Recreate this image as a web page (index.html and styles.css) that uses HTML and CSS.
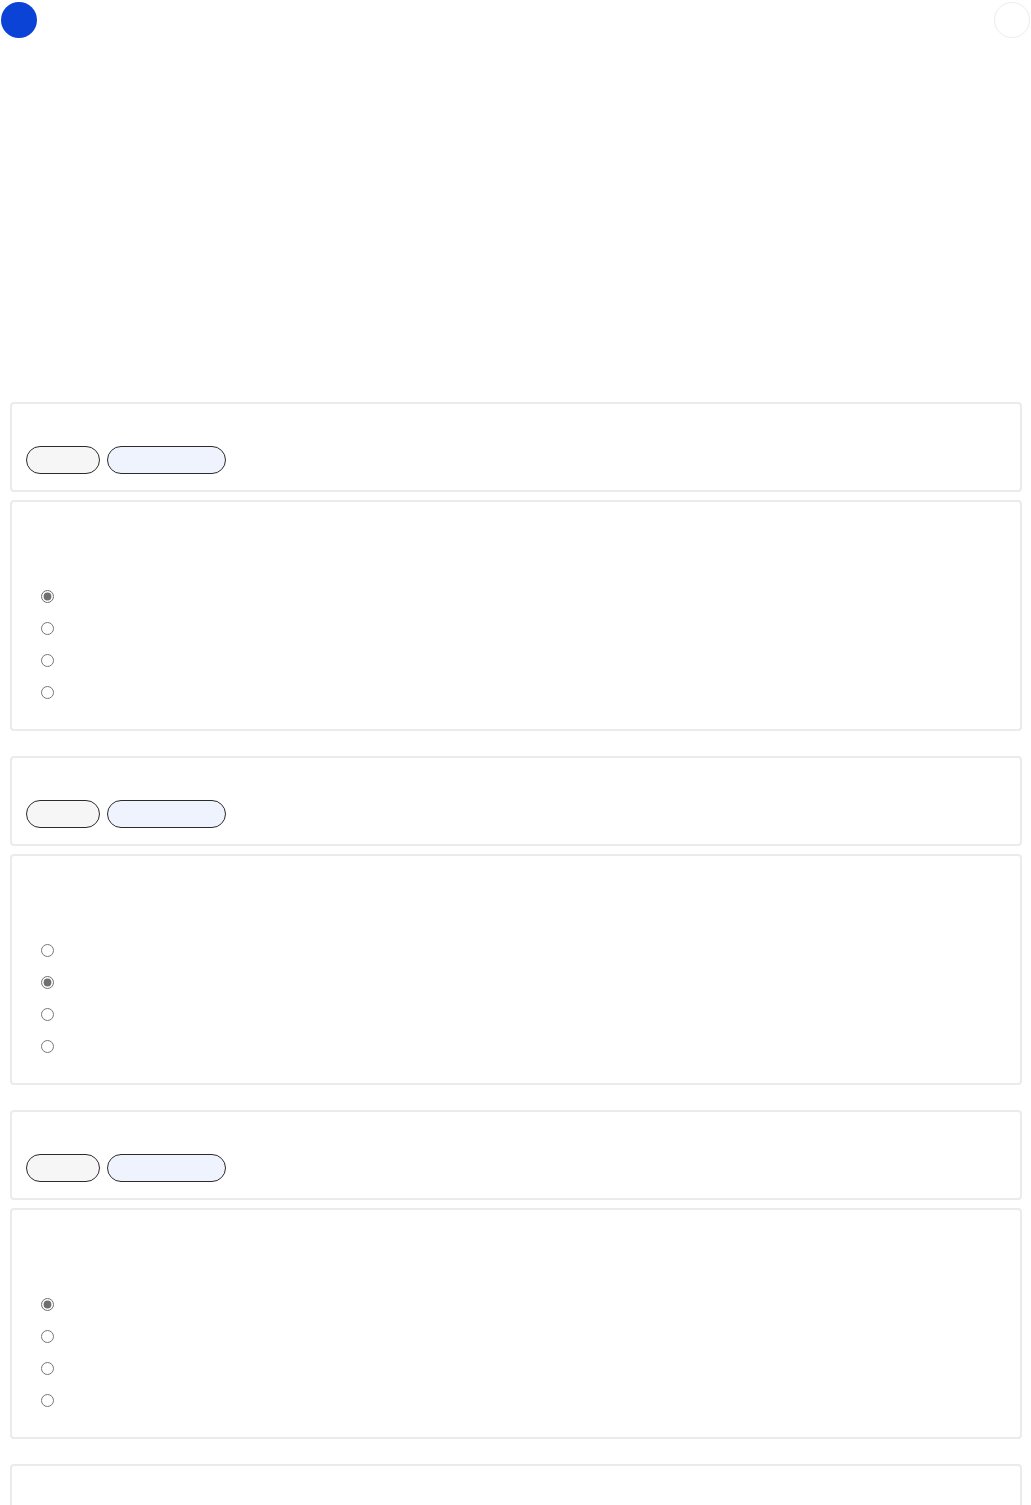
FILE: index.html
```html
<!DOCTYPE html>
<html lang="en">
<head>
  <meta charset="UTF-8" />
  <meta name="viewport" content="width=device-width, initial-scale=1.0"/>
  <title>Quiz</title>
  <link rel="stylesheet" href="styles.css">
</head>
<body>
  <div class="top-bar">
    <div class="avatar"></div>
    <div class="profile"></div>
  </div>

  <div class="quiz">
    <div class="question-block">
      <div class="card head-card">
        <div class="tags">
          <span class="tag tag-level"></span>
          <span class="tag tag-topic"></span>
        </div>
      </div>
      <div class="card body-card">
        <ul class="options">
          <li><input type="radio" name="q1" checked></li>
          <li><input type="radio" name="q1"></li>
          <li><input type="radio" name="q1"></li>
          <li><input type="radio" name="q1"></li>
        </ul>
      </div>
    </div>

    <div class="question-block">
      <div class="card head-card">
        <div class="tags">
          <span class="tag tag-level"></span>
          <span class="tag tag-topic"></span>
        </div>
      </div>
      <div class="card body-card">
        <ul class="options">
          <li><input type="radio" name="q2"></li>
          <li><input type="radio" name="q2" checked></li>
          <li><input type="radio" name="q2"></li>
          <li><input type="radio" name="q2"></li>
        </ul>
      </div>
    </div>

    <div class="question-block">
      <div class="card head-card">
        <div class="tags">
          <span class="tag tag-level"></span>
          <span class="tag tag-topic"></span>
        </div>
      </div>
      <div class="card body-card">
        <ul class="options">
          <li><input type="radio" name="q3" checked></li>
          <li><input type="radio" name="q3"></li>
          <li><input type="radio" name="q3"></li>
          <li><input type="radio" name="q3"></li>
        </ul>
      </div>
    </div>

    <div class="question-block">
      <div class="card head-card">
        <div class="tags">
          <span class="tag tag-level"></span>
          <span class="tag tag-topic"></span>
        </div>
      </div>
    </div>
  </div>
</body>
</html>
```

FILE: styles.css
```css
:root {
  --brand-blue: #0b43d6;
  --card-border: #ebebeb;
  --pill-border: #2b2b2b;
  --pill-grey: #f6f6f6;
  --pill-blue: #eef3fd;
}

body {
  font-family: 'Liberation Sans', Arial, sans-serif;
  background: #ffffff;
  margin: 0;
  color: #333;
}

.top-bar {
  display: flex;
  justify-content: space-between;
  padding: 2px 1px 0 1px;
  height: 38px;
}

.avatar,
.profile {
  width: 36px;
  height: 36px;
  border-radius: 50%;
  box-sizing: border-box;
}

.avatar {
  background: var(--brand-blue);
}

.profile {
  background: #fff;
  border: 1px solid #ececec;
}

.quiz {
  padding: 362px 9px 0 10px;
}

.question-block {
  margin-bottom: 25px;
}

.card {
  border: 2px solid var(--card-border);
  border-radius: 4px;
  background: #fff;
}

.head-card {
  padding: 42px 12px 16px 14px;
  margin-bottom: 8px;
}

.tags {
  display: flex;
  gap: 7px;
}

.tag {
  display: block;
  height: 28px;
  box-sizing: border-box;
  border: 1px solid var(--pill-border);
  border-radius: 14px;
}

.tag-level {
  width: 74px;
  background: var(--pill-grey);
}

.tag-topic {
  width: 119px;
  background: var(--pill-blue);
}

.body-card {
  padding: 78px 12px 21px 29px;
}

.options {
  list-style: none;
  margin: 0;
  padding: 0;
}

.options li {
  height: 32px;
  display: flex;
  align-items: center;
}

.options input {
  margin: 0;
  width: 13px;
  height: 13px;
  accent-color: #6f6f6f;
}
```
